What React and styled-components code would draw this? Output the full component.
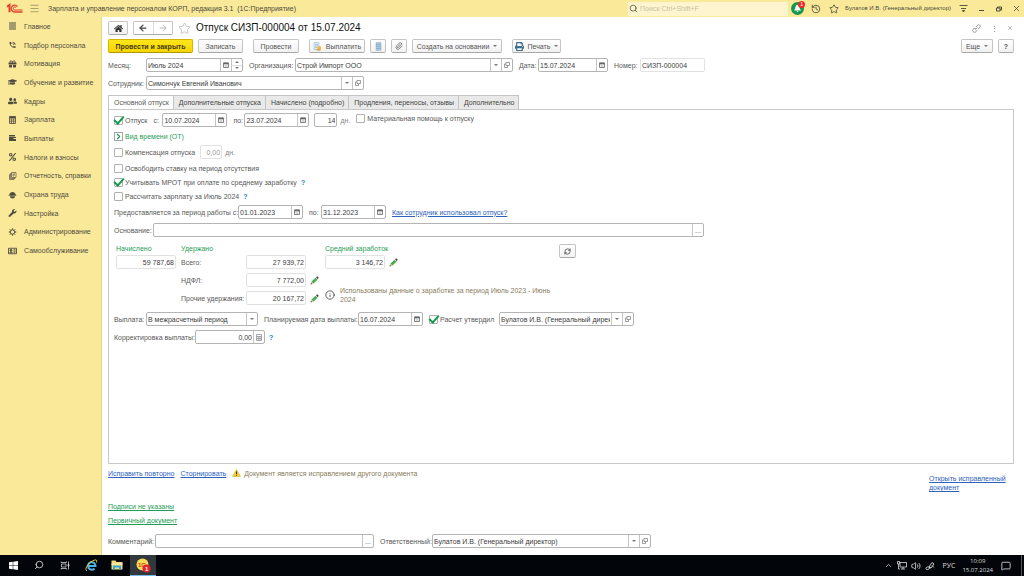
import React, { useState } from "react";
import styled, { createGlobalStyle } from "styled-components";
import {
  FaAlignJustify,
  FaGift,
  FaGraduationCap,
  FaHome,
  FaPercent,
  FaPrint,
  FaUserFriends,
  FaWrench,
} from "react-icons/fa";
import { MdPhoneInTalk } from "react-icons/md";
import {
  ArrowLeft,
  ArrowRight,
  ChevronRight,
  ChevronUp,
  History,
  Info,
  Menu,
  MessageSquare,
  Paperclip,
  RefreshCw,
  Search,
  Star,
  Volume2,
  X,
} from "lucide-react";

const sections = [
  { title: "Главное", icon: <FaAlignJustify /> },
  { title: "Подбор персонала", icon: <MdPhoneInTalk /> },
  { title: "Мотивация", icon: <FaGift /> },
  { title: "Обучение и развитие", icon: <FaGraduationCap /> },
  { title: "Кадры", icon: <FaUserFriends /> },
  { title: "Зарплата", icon: <SalaryIcon /> },
  { title: "Выплаты", icon: <CardsIcon /> },
  { title: "Налоги и взносы", icon: <FaPercent /> },
  { title: "Отчетность, справки", icon: <ReportsIcon /> },
  { title: "Охрана труда", icon: <HelmetIcon /> },
  { title: "Настройка", icon: <FaWrench /> },
  { title: "Администрирование", icon: <GearIcon /> },
  { title: "Самообслуживание", icon: <BadgeIcon /> },
];

const tabs = [
  "Основной отпуск",
  "Дополнительные отпуска",
  "Начислено (подробно)",
  "Продления, переносы, отзывы",
  "Дополнительно",
];

function SalaryIcon() {
  return (
    <svg viewBox="0 0 16 16" fill="none" stroke="currentColor">
      <path d="M2 1h12v14H2z" strokeWidth="1.600" />
      <path d="M2 3h12" strokeWidth="4" />
      <path d="M2 8h12M2 11.500h12M6 5v10M10 5v10" strokeWidth="1.300" />
    </svg>
  );
}

function CardsIcon() {
  return (
    <svg viewBox="0 0 16 16" fill="currentColor">
      <path d="M1 2h12v3H1z" />
      <path d="M1 6h14v8H1zM10 8v2h5V8z" fillRule="evenodd" />
    </svg>
  );
}

function ReportsIcon() {
  return (
    <svg viewBox="0 0 16 16" fill="none" stroke="currentColor" strokeWidth="1.300">
      <path d="M6 1h9v10H6z" />
      <path d="M6 3H4v10h9v-2M4 5H2v10h9v-2" />
      <path d="M8 4h5M8 6h5M8 8h3" />
    </svg>
  );
}

function HelmetIcon() {
  return (
    <svg viewBox="0 0 16 16" fill="currentColor">
      <path d="M2 7c0-7 12-7 12 0l1.500 1v1.500H.5V8z" />
      <path d="M3 10.500h10c0 6-10 6-10 0z" />
    </svg>
  );
}

function GearIcon() {
  return (
    <svg viewBox="0 0 16 16" fill="none" stroke="currentColor">
      <circle cx="8" cy="8" r="4.500" strokeWidth="2" />
      <path d="M8 .5v3M8 12.500v3M.5 8h3M12.500 8h3M2.700 2.700l2 2M11.300 11.300l2 2M2.700 13.300l2-2M11.300 4.700l2-2" strokeWidth="2" />
    </svg>
  );
}

function BadgeIcon() {
  return (
    <svg viewBox="0 0 18 16" fill="none" stroke="currentColor" strokeWidth="1.800">
      <path d="M1 2.500h16v11H1z" />
      <circle cx="6" cy="6.500" r="1.800" fill="currentColor" />
      <path d="M3.500 11.500c0-3 5-3 5 0zM11 5.500h4M11 8h4M11 10.500h4" />
    </svg>
  );
}

function LogoIcon() {
  return (
    <svg width="17" height="11" viewBox="0 0 34 22" fill="none" stroke="#e0412f">
      <path d="M2 7.500l5-3.500v14.500" strokeWidth="4" />
      <path d="M23 7.500a6.800 6.800 0 1 0-5.500 10.500H33" strokeWidth="2.600" />
      <path d="M20 9.500a3 3 0 1 0-2.500 4.500H33" strokeWidth="2" />
    </svg>
  );
}

function CalendarIcon() {
  return (
    <svg width="6" height="6" viewBox="0 0 12 12" fill="none" stroke="#666">
      <path d="M1 2h10v9H1z" strokeWidth="1.600" />
      <path d="M1 3h10" strokeWidth="3.500" />
      <path d="M3 7h6M3 9h6" strokeWidth="1" stroke="#aaa" />
    </svg>
  );
}

function CalcIcon() {
  return (
    <svg width="6" height="7" viewBox="0 0 12 14" fill="none" stroke="#888">
      <path d="M1 1h10v12H1zM1 5h10M1 9h10M4.500 5v8M8 5v8" strokeWidth="1.400" />
    </svg>
  );
}

function OpenIcon() {
  return (
    <svg width="6" height="6" viewBox="0 0 12 12" fill="none" stroke="#777" strokeWidth="1.400">
      <path d="M4 1h7v6H4z" />
      <path d="M4 4H1v7h6V7" />
    </svg>
  );
}

function PencilIcon() {
  return (
    <svg width="9" height="9" viewBox="0 0 18 18">
      <path d="M1 17l2-6 4 4z" fill="#d9b98a" />
      <path d="M1 17l1-3 2 2z" fill="#333" />
      <path d="M3 11l8-7.500 4 4L7 15z" fill="#45ad4f" />
      <path d="M12 2.600L14.500.5l3 3-2 3z" fill="#4b4040" />
    </svg>
  );
}

function LinkIcon() {
  return (
    <svg width="9" height="9" viewBox="0 0 18 18" fill="none" stroke="#777" strokeWidth="1.500">
      <path d="M8 6l3-3.500c3-3 7 1 5 4L12.500 9.500" />
      <path d="M8.500 9.500L5 9c-5 1-5 7 0 7.500 3 0 4-2 4.500-4" />
      <path d="M6 12l6-6" strokeDasharray="2 1.500" />
    </svg>
  );
}

function PayIcon() {
  return (
    <svg width="9" height="9" viewBox="0 0 18 18">
      <path d="M2 1h10v14H2z" fill="#dceaf4" stroke="#8fb1c9" />
      <path d="M4 5h6M4 8h6M4 11h4" stroke="#7ea4bf" />
      <circle cx="12.500" cy="12" r="4" fill="#f0b840" />
      <path d="M7 16h8" stroke="#d08a28" strokeWidth="2" />
    </svg>
  );
}

function SheetIcon() {
  return (
    <svg width="7" height="9" viewBox="0 0 14 18">
      <path d="M2 1h10v16H2z" fill="#a9c9dc" stroke="#8fb1c9" />
      <path d="M2 5h10M2 9h10M2 13h10" stroke="#7499b0" />
    </svg>
  );
}

function WarningIcon() {
  return (
    <svg width="9" height="8" viewBox="0 0 18 16">
      <path d="M9 1l8 14H1z" fill="#f4cf2e" stroke="#c9a416" strokeLinejoin="round" />
      <path d="M9 5v5M9 11.500v2" stroke="#333" strokeWidth="2" />
    </svg>
  );
}

function BellIcon() {
  return (
    <svg width="9" height="9" viewBox="0 0 18 18" fill="#fff">
      <path d="M9 2c-4 0-4 4-4.500 7L2 13h14l-2.500-4C13 6 13 2 9 2zM7 14h4l-2 2.500z" />
    </svg>
  );
}

function ServiceIcon() {
  return (
    <svg width="9" height="9" viewBox="0 0 18 18" fill="none" stroke="#4b4a3a" strokeWidth="1.800">
      <path d="M1 3h16M4 9h10" />
      <path d="M7 13h4l-2 3z" fill="#4b4a3a" />
    </svg>
  );
}

function RestoreIcon() {
  return (
    <svg width="6" height="6" viewBox="0 0 12 12" fill="none" stroke="#4b4a3a" strokeWidth="2">
      <path d="M1 4h7v6H1z" />
      <path d="M3 4V2h8v6H8" />
    </svg>
  );
}

function WindowsIcon() {
  return (
    <svg width="9" height="9" viewBox="0 0 18 18" fill="#fff">
      <path d="M0 2.500l7.500-1V8.500H0zM8.500 1.400L18 0v8.500H8.500zM0 9.500h7.500v7L0 15.500zM8.500 9.500H18V18l-9.500-1.400z" />
    </svg>
  );
}

function TaskViewIcon() {
  return (
    <svg width="10" height="9" viewBox="0 0 20 18" fill="none" stroke="#ddd" strokeWidth="1.500">
      <path d="M3 6h9v6H3zM2 1v2h11V1M2 17v-2h11v2M17 1v16" />
      <path d="M16 7h2v3h-2z" fill="#ddd" />
    </svg>
  );
}

function ExplorerIcon() {
  return (
    <svg width="12" height="10" viewBox="0 0 24 20">
      <path d="M1 1h8l2 3h12v15H1z" fill="#f6d978" />
      <path d="M1 7h22v3H1z" fill="#fbe9a6" />
      <path d="M4 19v-8h16v8h-4v-4H8v4z" fill="#39a5dc" />
    </svg>
  );
}

function BrowserIcon() {
  return (
    <svg width="13" height="13" viewBox="0 0 26 26" fill="none">
      <path d="M6 14h15a7.500 7.500 0 1 0-2 5" stroke="#48b4ea" strokeWidth="4" />
      <path d="M4 24C-2 21 6 8 15 4c7-4 10-2 8 3" stroke="#f1c232" strokeWidth="2" />
    </svg>
  );
}

function AppIcon() {
  return (
    <svg width="15" height="15" viewBox="0 0 30 30">
      <circle cx="13" cy="13" r="12" fill="#f9dc55" />
      <text x="4" y="17" fontSize="12" fontWeight="700" fill="#d8392b">1С</text>
      <circle cx="21" cy="21" r="8" fill="#e0242d" />
      <text x="18" y="25" fontSize="12" fontWeight="700" fill="#fff">1</text>
    </svg>
  );
}

function NetworkIcon() {
  return (
    <svg width="10" height="9" viewBox="0 0 20 18" fill="none" stroke="#ddd" strokeWidth="1.600">
      <path d="M6 3h13v9H6zM12 12v4M8 16h8M1 1h4v5H1zM3 6v10h3" />
    </svg>
  );
}

function PenIcon() {
  return (
    <svg width="10" height="10" viewBox="0 0 20 20" fill="none" stroke="#ddd" strokeWidth="1.800">
      <path d="M8 12l6-9 4 3-6 8zM8 12l4 2M8 12c-5-1-7 2-6 4s6 2 7-2M14 9l4 4" />
    </svg>
  );
}

function Field({ id, width, value, right, locked, buttons = [], label }) {
  const [text, setText] = useState(value || "");
  return (
    <FieldBox $width={width} $locked={locked}>
      <FieldInput
        id={id}
        aria-label={label}
        value={text}
        readOnly={locked}
        $right={right}
        onChange={(e) => setText(e.target.value)}
      />
      {buttons.map((kind) =>
        kind === "spin" ? (
          <Spinner key={kind}>
            <SpinButton type="button" aria-label="Следующий месяц"><Caret $up /></SpinButton>
            <SpinButton type="button" aria-label="Предыдущий месяц"><Caret /></SpinButton>
          </Spinner>
        ) : (
          <FieldButton key={kind} type="button" aria-label={kind}>
            {kind === "calendar" && <CalendarIcon />}
            {kind === "calc" && <CalcIcon />}
            {kind === "open" && <OpenIcon />}
            {kind === "list" && <Caret />}
            {kind === "more" && "..."}
          </FieldButton>
        )
      )}
    </FieldBox>
  );
}

function Check({ id, children, checked }) {
  const [on, setOn] = useState(Boolean(checked));
  return (
    <CheckLabel htmlFor={id}>
      <CheckInput id={id} type="checkbox" checked={on} onChange={() => setOn(!on)} />
      {children}
    </CheckLabel>
  );
}

function TopBar() {
  return (
    <Top>
      <LogoIcon />
      <MenuButton aria-label="Меню"><Menu size={11} strokeWidth={1} /></MenuButton>
      <AppTitle>Зарплата и управление персоналом КОРП, редакция 3.1&nbsp; (1С:Предприятие)</AppTitle>
      <SearchBox>
        <Search size={9} />
        <SearchInput aria-label="Поиск" placeholder="Поиск Ctrl+Shift+F" />
      </SearchBox>
      <TopTools>
        <BellButton aria-label="Уведомления">
          <BellIcon />
          <Count>1</Count>
        </BellButton>
        <TopButton aria-label="История"><History size={10} /></TopButton>
        <TopButton aria-label="Избранное"><Star size={10} /></TopButton>
        <User>Булатов И.В. (Генеральный директор)</User>
        <TopButton aria-label="Сервис"><ServiceIcon /></TopButton>
        <TopButton aria-label="Свернуть"><Dash /></TopButton>
        <TopButton aria-label="Развернуть"><RestoreIcon /></TopButton>
        <TopButton aria-label="Закрыть"><X size={9} /></TopButton>
      </TopTools>
    </Top>
  );
}

function DocumentHeader() {
  return (
    <>
      <HeaderRow>
        <Button $width={20} aria-label="Начальная страница"><FaHome size={9} color="#333" /></Button>
        <ButtonPair>
          <PairButton aria-label="Назад"><ArrowLeft size={10} strokeWidth={3} /></PairButton>
          <PairButton aria-label="Вперед" $faded><ArrowRight size={10} /></PairButton>
        </ButtonPair>
        <StarButton aria-label="В избранное"><Star size={13} strokeWidth={1} /></StarButton>
        <Title>Отпуск СИЗП-000004 от 15.07.2024</Title>
        <HeaderTools>
          <ToolButton aria-label="Ссылка"><LinkIcon /></ToolButton>
          <ToolButton aria-label="Еще действия">⋮</ToolButton>
          <ToolButton aria-label="Закрыть документ"><X size={6} /></ToolButton>
        </HeaderTools>
      </HeaderRow>
      <Toolbar>
        <ToolbarGroup>
          <Button $primary $width={85}>Провести и закрыть</Button>
          <Button $width={45}>Записать</Button>
        </ToolbarGroup>
        <Button $width={46}>Провести</Button>
        <ToolbarGroup>
          <Button $width={56}><PayIcon />Выплатить</Button>
          <Button $width={16} aria-label="Расчетный листок"><SheetIcon /></Button>
          <Button $width={16} aria-label="Файлы"><Paperclip size={8} /></Button>
          <Button $width={90}>Создать на основании<Caret /></Button>
        </ToolbarGroup>
        <Button $width={49}><FaPrint size={9} color="#3f6d8c" />Печать<Caret /></Button>
        <ToolbarEnd>
          <Button $width={32}>Еще<Caret /></Button>
          <Button $width={16}><b>?</b></Button>
        </ToolbarEnd>
      </Toolbar>
      <Row>
        <Label htmlFor="month" $width={38}>Месяц:</Label>
        <Field id="month" width={97} value="Июль 2024" buttons={["calendar", "spin"]} />
        <Label htmlFor="org" $width={46} $gap>Организация:</Label>
        <Field id="org" width={218} value="Строй Импорт ООО" buttons={["list", "open"]} />
        <Label htmlFor="date" $width={19} $gap>Дата:</Label>
        <Field id="date" width={70} value="15.07.2024" buttons={["calendar"]} />
        <Label htmlFor="number" $width={26} $gap>Номер:</Label>
        <Field id="number" width={65} value="СИЗП-000004" locked />
      </Row>
      <Row>
        <Label htmlFor="employee" $width={38}>Сотрудник:</Label>
        <Field id="employee" width={218} value="Симончук Евгений Иванович" buttons={["list", "open"]} />
      </Row>
    </>
  );
}

function Totals() {
  return (
    <TotalsRow>
      <TotalsColumn $width={65}>
        <GreenLabel htmlFor="accrued">Начислено</GreenLabel>
        <Field id="accrued" width={60} value="59 787,68" right locked />
      </TotalsColumn>
      <TotalsColumn $width={144}>
        <GreenText>Удержано</GreenText>
        <TotalsLine>
          <Label htmlFor="total" $width={65}>Всего:</Label>
          <Field id="total" width={60} value="27 939,72" right locked />
        </TotalsLine>
        <TotalsLine>
          <Label htmlFor="ndfl" $width={65}>НДФЛ:</Label>
          <Field id="ndfl" width={60} value="7 772,00" right locked />
          <PlainButton aria-label="Изменить НДФЛ"><PencilIcon /></PlainButton>
        </TotalsLine>
        <TotalsLine>
          <Label htmlFor="other" $width={65}>Прочие удержания:</Label>
          <Field id="other" width={60} value="20 167,72" right locked />
          <PlainButton aria-label="Изменить удержания"><PencilIcon /></PlainButton>
        </TotalsLine>
      </TotalsColumn>
      <TotalsColumn $width={234}>
        <GreenLabel htmlFor="average">Средний заработок</GreenLabel>
        <TotalsLine>
          <Field id="average" width={60} value="3 146,72" right locked />
          <PlainButton aria-label="Изменить средний заработок"><PencilIcon /></PlainButton>
        </TotalsLine>
        <Note>
          <Info size={10} color="#444" />
          <NoteText>Использованы данные о заработке за период Июль 2023 - Июнь 2024</NoteText>
        </Note>
      </TotalsColumn>
      <Button $width={17} aria-label="Обновить"><RefreshCw size={7} strokeWidth={3} /></Button>
    </TotalsRow>
  );
}

function VacationPanel() {
  return (
    <Panel>
      <PanelRow $height={16}>
        <Check id="vacation" checked>Отпуск</Check>
        <Label htmlFor="from" $width={9} $gap>с:</Label>
        <Field id="from" width={65} value="10.07.2024" buttons={["calendar"]} />
        <Label htmlFor="to" $width={11} $gap>по:</Label>
        <Field id="to" width={65} value="23.07.2024" buttons={["calendar"]} />
        <DaysField>
          <Field width={23} value="14" right label="Дней отпуска" />
          <Muted>дн.</Muted>
        </DaysField>
        <Aid>
          <Check id="aid">Материальная помощь к отпуску</Check>
        </Aid>
      </PanelRow>
      <PanelRow $height={16}>
        <Expander type="button">
          <ExpandMark><ChevronRight size={9} strokeWidth={3} color="#149850" /></ExpandMark>
          Вид времени (ОТ)
        </Expander>
      </PanelRow>
      <PanelRow $height={16}>
        <Check id="compensation">Компенсация отпуска</Check>
        <DaysField>
          <FadedField>
            <Field width={22} value="0,00" right locked label="Дней компенсации" />
          </FadedField>
          <Muted>дн.</Muted>
        </DaysField>
      </PanelRow>
      <PanelRow $height={16}>
        <Check id="release">Освободить ставку на период отсутствия</Check>
      </PanelRow>
      <PanelRow $height={12}>
        <Check id="mrot" checked>Учитывать МРОТ при оплате по среднему заработку</Check>
        <Help aria-label="Справка">?</Help>
      </PanelRow>
      <PanelRow $height={16}>
        <Check id="salary">Рассчитать зарплату за Июль 2024</Check>
        <Help aria-label="Справка">?</Help>
      </PanelRow>
      <PanelRow $height={16}>
        <Label htmlFor="period-from" $width={124}>Предоставляется за период работы с:</Label>
        <Field id="period-from" width={65} value="01.01.2023" buttons={["calendar"]} />
        <Label htmlFor="period-to" $width={12} $gap>по:</Label>
        <Field id="period-to" width={65} value="31.12.2023" buttons={["calendar"]} />
        <InlineLink href="#usage">Как сотрудник использовал отпуск?</InlineLink>
      </PanelRow>
      <PanelRow $height={20}>
        <Label htmlFor="reason" $width={39}>Основание:</Label>
        <Field id="reason" width={551} buttons={["more"]} />
      </PanelRow>
      <Totals />
      <PanelRow $height={18}>
        <Label htmlFor="payment" $width={32}>Выплата:</Label>
        <FieldBox $width={112}>
          <Select id="payment">
            <option>В межрасчетный период</option>
            <option>С зарплатой</option>
          </Select>
          <SelectArrow><Caret /></SelectArrow>
        </FieldBox>
        <Label htmlFor="pay-date" $width={94} $gap>Планируемая дата выплаты:</Label>
        <Field id="pay-date" width={65} value="16.07.2024" buttons={["calendar"]} />
        <Approved>
          <Check id="approved" checked>Расчет утвердил</Check>
        </Approved>
        <Field width={135} value="Булатов И.В. (Генеральный директор)" label="Расчет утвердил" buttons={["list", "open"]} />
      </PanelRow>
      <PanelRow $height={18}>
        <Label htmlFor="correction" $width={81}>Корректировка выплаты:</Label>
        <Field id="correction" width={70} value="0,00" right buttons={["calc"]} />
        <Help aria-label="Справка">?</Help>
      </PanelRow>
    </Panel>
  );
}

function Footer() {
  return (
    <>
      <FooterRow>
        <FooterLinks>
          <Link href="#fix">Исправить повторно</Link>
          <Link href="#storno">Сторнировать</Link>
          <Warning><WarningIcon />Документ является исправлением другого документа</Warning>
        </FooterLinks>
        <OpenLink href="#source">Открыть исправленный документ</OpenLink>
      </FooterRow>
      <GreenLinks>
        <Link $green href="#signs">Подписи не указаны</Link>
        <Link $green href="#primary">Первичный документ</Link>
      </GreenLinks>
      <Row>
        <Label htmlFor="comment" $width={47}>Комментарий:</Label>
        <Field id="comment" width={219} buttons={["more"]} />
        <Label htmlFor="responsible" $width={52} $gap>Ответственный:</Label>
        <Field id="responsible" width={219} value="Булатов И.В. (Генеральный директор)" buttons={["list", "open"]} />
      </Row>
    </>
  );
}

function Taskbar() {
  return (
    <TaskbarRow>
      <TaskButton aria-label="Пуск"><WindowsIcon /></TaskButton>
      <TaskButton aria-label="Найти"><Search size={10} transform="scale(-1 1)" /></TaskButton>
      <TaskButton aria-label="Представление задач"><TaskViewIcon /></TaskButton>
      <TaskButton aria-label="Браузер"><BrowserIcon /></TaskButton>
      <TaskButton aria-label="Проводник"><ExplorerIcon /></TaskButton>
      <TaskButton aria-label="1С:Предприятие" $active><AppIcon /></TaskButton>
      <Tray>
        <ChevronUp size={9} />
        <NetworkIcon />
        <Volume2 size={10} />
        <PenIcon />
        <Language>РУС</Language>
        <Clock>
          <span>10:09</span>
          <span>15.07.2024</span>
        </Clock>
        <MessageSquare size={10} />
      </Tray>
      <DesktopEdge aria-label="Свернуть все окна" />
    </TaskbarRow>
  );
}

export default function App() {
  const [active, setActive] = useState(0);
  return (
    <>
      <GlobalStyle />
      <Page>
        <TopBar />
        <Body>
          <Sidebar>
            <SectionList>
              {sections.map((s) => (
                <Section key={s.title} href="#section">
                  <SectionIcon>{s.icon}</SectionIcon>
                  {s.title}
                </Section>
              ))}
            </SectionList>
          </Sidebar>
          <Content>
            <DocumentHeader />
            <Tabs role="tablist">
              {tabs.map((tab, i) => (
                <Tab key={tab} role="tab" aria-selected={active === i} $active={active === i} onClick={() => setActive(i)}>
                  {tab}
                </Tab>
              ))}
            </Tabs>
            <VacationPanel />
            <Footer />
          </Content>
        </Body>
        <Taskbar />
      </Page>
    </>
  );
}

const GlobalStyle = createGlobalStyle`
  * {
    box-sizing: border-box;
  }
  body {
    margin: 0;
    background: #fff;
    color: #595959;
    font: 7px/9px "Liberation Sans", Arial, sans-serif;
  }
  button, input, select {
    margin: 0;
    padding: 0;
    border: 0;
    background: none;
    color: inherit;
    font: inherit;
  }
  svg {
    flex: none;
  }
`;

const Page = styled.div`
  display: flex;
  flex-direction: column;
  min-height: 100vh;
`;

const Top = styled.header`
  display: flex;
  align-items: center;
  height: 17px;
  padding-left: 6px;
  background: #fbe99a;
  color: #4b4a3a;
`;

const TopButton = styled.button`
  display: flex;
  align-items: center;
  justify-content: center;
  width: 18px;
  height: 16px;
  &:last-child {
    width: 16px;
  }
`;

const MenuButton = styled(TopButton)`
  width: 22px;
`;

const AppTitle = styled.span`
  flex: 1;
  margin-left: 3px;
  white-space: nowrap;
`;

const SearchBox = styled.div`
  display: flex;
  align-items: center;
  gap: 2px;
  width: 160px;
  height: 14px;
  padding-left: 1px;
  background: #fef5cf;
`;

const SearchInput = styled.input`
  flex: 1;
  outline: none;
  &::placeholder {
    color: #c9c2a2;
    opacity: 1;
  }
`;

const TopTools = styled.div`
  display: flex;
  align-items: center;
  margin-left: 3px;
`;

const BellButton = styled.button`
  position: relative;
  display: flex;
  align-items: center;
  justify-content: center;
  width: 13px;
  height: 13px;
  margin-right: 3px;
  border-radius: 50%;
  background: #149850;
  color: #fff;
`;

const Count = styled.span`
  position: absolute;
  top: -1px;
  right: -1px;
  width: 7px;
  height: 7px;
  border-radius: 50%;
  background: #ee2b2b;
  font-size: 5px;
  line-height: 7px;
`;

const User = styled.span`
  margin: 0 3px 0 2px;
  font-size: 6px;
  white-space: nowrap;
`;

const Dash = styled.span`
  width: 5px;
  height: 1px;
  margin-top: 4px;
  background: #4b4a3a;
`;

const Body = styled.div`
  display: flex;
  flex: 1;
`;

const Sidebar = styled.nav`
  flex: none;
  width: 102px;
  border-right: 1px solid #e6d68c;
  background: #fbe99a;
`;

const SectionList = styled.div`
  display: flex;
  flex-direction: column;
  height: 243px;
`;

const Section = styled.a`
  display: flex;
  flex: 1;
  align-items: center;
  gap: 7px;
  padding-left: 8px;
  color: #4e4c40;
  text-decoration: none;
  white-space: nowrap;
`;

const SectionIcon = styled.span`
  display: flex;
  justify-content: center;
  width: 9px;
  svg {
    width: 9px;
    height: 8px;
  }
`;

const Content = styled.main`
  display: flex;
  flex: 1;
  flex-direction: column;
  min-width: 0;
  padding: 4px 10px 7px 6px;
`;

const HeaderRow = styled.div`
  display: flex;
  align-items: center;
  height: 14px;
`;

const Button = styled.button`
  display: flex;
  flex: none;
  align-items: center;
  justify-content: center;
  gap: 4px;
  width: ${(props) => props.$width}px;
  height: 14px;
  border: 1px solid ${(props) => (props.$primary ? "#d5b400" : "#c4c4c4")};
  border-bottom-color: ${(props) => (props.$primary ? "#b39700" : "#a8a8a8")};
  border-radius: 2px;
  background: ${(props) => (props.$primary ? "linear-gradient(#ffe61a, #f6d400)" : "linear-gradient(#fff, #f1f1f1)")};
  color: ${(props) => (props.$primary ? "#443c10" : "#555")};
  font-weight: ${(props) => (props.$primary ? 700 : 400)};
  white-space: nowrap;
`;

const ButtonPair = styled.div`
  display: flex;
  width: 40px;
  height: 14px;
  margin-left: 5px;
  border: 1px solid #c4c4c4;
  border-bottom-color: #a8a8a8;
  border-radius: 2px;
`;

const PairButton = styled.button`
  display: flex;
  flex: 1;
  align-items: center;
  justify-content: center;
  color: ${(props) => (props.$faded ? "#aaa" : "#444")};
  & + & {
    border-left: 1px solid #ddd;
  }
`;

const StarButton = styled.button`
  display: flex;
  margin: 0 5px;
  color: #999;
`;

const Title = styled.h1`
  flex: 1;
  margin: 0;
  color: #111;
  font-size: 10px;
  font-weight: 400;
  line-height: 14px;
`;

const HeaderTools = styled.div`
  display: flex;
`;

const ToolButton = styled.button`
  display: flex;
  align-items: center;
  justify-content: center;
  width: 16px;
  height: 12px;
  color: #666;
  &:first-child {
    width: 20px;
  }
  &:last-child {
    width: 9px;
    margin-left: 3px;
  }
`;

const Toolbar = styled.div`
  display: flex;
  gap: 10px;
  margin: 4px 0 5px;
`;

const ToolbarGroup = styled.div`
  display: flex;
  gap: 5px;
`;

const ToolbarEnd = styled(ToolbarGroup)`
  margin-left: auto;
`;

const Row = styled.div`
  display: flex;
  align-items: center;
  & + & {
    margin-top: 4px;
  }
`;

const Label = styled.label`
  flex: none;
  width: ${(props) => props.$width}px;
  margin-left: ${(props) => (props.$gap ? 6 : 0)}px;
  white-space: nowrap;
`;

const FieldBox = styled.span`
  display: flex;
  flex: none;
  width: ${(props) => props.$width}px;
  height: 14px;
  border: 1px solid ${(props) => (props.$locked ? "#e2e2e2" : "#b4b4b4")};
  border-radius: 2px;
  background: #fff;
`;

const FieldInput = styled.input`
  flex: 1;
  min-width: 0;
  padding: 0 1px;
  outline: none;
  color: #3c3c3c;
  text-align: ${(props) => (props.$right ? "right" : "left")};
`;

const FieldButton = styled.button`
  display: flex;
  flex: none;
  align-items: center;
  justify-content: center;
  width: 11px;
  border-left: 1px solid #c4c4c4;
`;

const Spinner = styled.span`
  display: flex;
  flex: none;
  flex-direction: column;
  width: 11px;
  border-left: 1px solid #c4c4c4;
`;

const SpinButton = styled.button`
  display: flex;
  flex: 1;
  align-items: center;
  justify-content: center;
  & + & {
    border-top: 1px solid #ddd;
  }
`;

const Caret = styled.i`
  border: 2px solid transparent;
  border-width: ${(props) => (props.$up ? "0 2px 2px" : "2px 2px 0")};
  border-top-color: ${(props) => (props.$up ? "transparent" : "#777")};
  border-bottom-color: ${(props) => (props.$up ? "#777" : "transparent")};
`;

const Select = styled.select`
  flex: 1;
  padding: 0 1px;
  outline: none;
  appearance: none;
  color: #3c3c3c;
`;

const SelectArrow = styled.span`
  display: flex;
  align-items: center;
  justify-content: center;
  width: 11px;
  border-left: 1px solid #c4c4c4;
  pointer-events: none;
`;

const CheckLabel = styled.label`
  display: flex;
  align-items: center;
  gap: 2px;
  white-space: nowrap;
`;

const CheckInput = styled.input`
  display: flex;
  align-items: center;
  justify-content: center;
  width: 9px;
  height: 9px;
  border: 1px solid #b0b0b0;
  border-radius: 1px;
  appearance: none;
  &:checked::after {
    content: "";
    flex: none;
    width: 4px;
    height: 8px;
    margin-bottom: 3px;
    border: solid #149850;
    border-width: 0 2px 2px 0;
    transform: rotate(42deg);
  }
`;

const Tabs = styled.div`
  display: flex;
  margin-top: 5px;
`;

const Tab = styled.button`
  position: relative;
  z-index: ${(props) => (props.$active ? 1 : 0)};
  height: 14px;
  margin-right: -1px;
  margin-bottom: ${(props) => (props.$active ? "-1px" : 0)};
  padding: 0 4px 0 5px;
  border: 1px solid #c4c4c4;
  border-bottom: 0;
  background: ${(props) => (props.$active ? "#fff" : "#e9e9e9")};
  color: ${(props) => (props.$active ? "#595959" : "#444")};
  white-space: nowrap;
`;

const Panel = styled.section`
  display: flex;
  flex: 1;
  flex-direction: column;
  padding: 2px 5px;
  border: 1px solid #c8c8c8;
`;

const PanelRow = styled.div`
  display: flex;
  flex: none;
  align-items: center;
  height: ${(props) => props.$height}px;
`;

const DaysField = styled.span`
  display: flex;
  align-items: center;
  gap: 3px;
  margin-left: 5px;
`;

const FadedField = styled.span`
  input {
    color: #999;
  }
`;

const Muted = styled.span`
  color: #888;
`;

const Aid = styled.span`
  margin-left: 6px;
  padding-bottom: 4px;
`;

const Approved = styled.span`
  width: 70px;
  margin-left: 6px;
`;

const Expander = styled.button`
  display: flex;
  align-items: center;
  gap: 2px;
  color: #1f9d57;
`;

const ExpandMark = styled.span`
  display: flex;
  align-items: center;
  justify-content: center;
  width: 9px;
  height: 9px;
  border: 1px solid #a5a5a5;
`;

const Help = styled.button`
  margin-left: 4px;
  color: #2583c5;
  font-weight: 700;
`;

const Link = styled.a`
  color: ${(props) => (props.$green ? "#1f9d57" : "#2d62bd")};
  text-decoration: underline;
`;

const InlineLink = styled(Link)`
  margin-left: 6px;
`;

const TotalsRow = styled.div`
  display: flex;
  align-items: flex-start;
  margin: 4px 0 5px;
  padding-left: 2px;
`;

const TotalsColumn = styled.div`
  display: flex;
  flex: none;
  flex-direction: column;
  gap: 4px;
  width: ${(props) => props.$width}px;
  & > :first-child {
    margin-bottom: -2px;
  }
`;

const TotalsLine = styled.div`
  display: flex;
  align-items: center;
`;

const GreenLabel = styled.label`
  color: #1f9d57;
  white-space: nowrap;
`;

const GreenText = styled.span`
  color: #1f9d57;
`;

const PlainButton = styled.button`
  display: flex;
  margin-left: 4px;
`;

const Note = styled.div`
  display: flex;
  align-items: center;
  gap: 5px;
  margin-top: 13px;
`;

const NoteText = styled.span`
  color: #897c5d;
`;

const FooterRow = styled.div`
  display: flex;
  justify-content: space-between;
`;

const FooterLinks = styled.div`
  display: flex;
  gap: 6px;
  padding-top: 5px;
`;

const Warning = styled.span`
  display: flex;
  gap: 3px;
  color: #897c5d;
`;

const OpenLink = styled(Link)`
  width: 85px;
  padding-top: 10px;
`;

const GreenLinks = styled.div`
  display: flex;
  flex-direction: column;
  align-items: flex-start;
  gap: 5px;
  margin: 10px 0 9px;
`;

const TaskbarRow = styled.footer`
  display: flex;
  height: 21px;
  background: #02050a;
  color: #ddd;
`;

const TaskButton = styled.button`
  display: flex;
  align-items: center;
  justify-content: center;
  width: 26px;
  border-bottom: 1px solid ${(props) => (props.$active ? "#76b9ed" : "transparent")};
  background: ${(props) => (props.$active ? "#33383d" : "none")};
`;

const Tray = styled.div`
  display: flex;
  align-items: center;
  gap: 4px;
  margin-left: auto;
  padding-right: 10px;
  font-family: "Open Sans", sans-serif;
`;

const Language = styled.span`
  margin: 0 3px;
`;

const Clock = styled.span`
  display: flex;
  flex-direction: column;
  align-items: center;
  margin-right: 4px;
  font-size: 6px;
`;

const DesktopEdge = styled.button`
  width: 3px;
  border-left: 1px solid #555;
`;
